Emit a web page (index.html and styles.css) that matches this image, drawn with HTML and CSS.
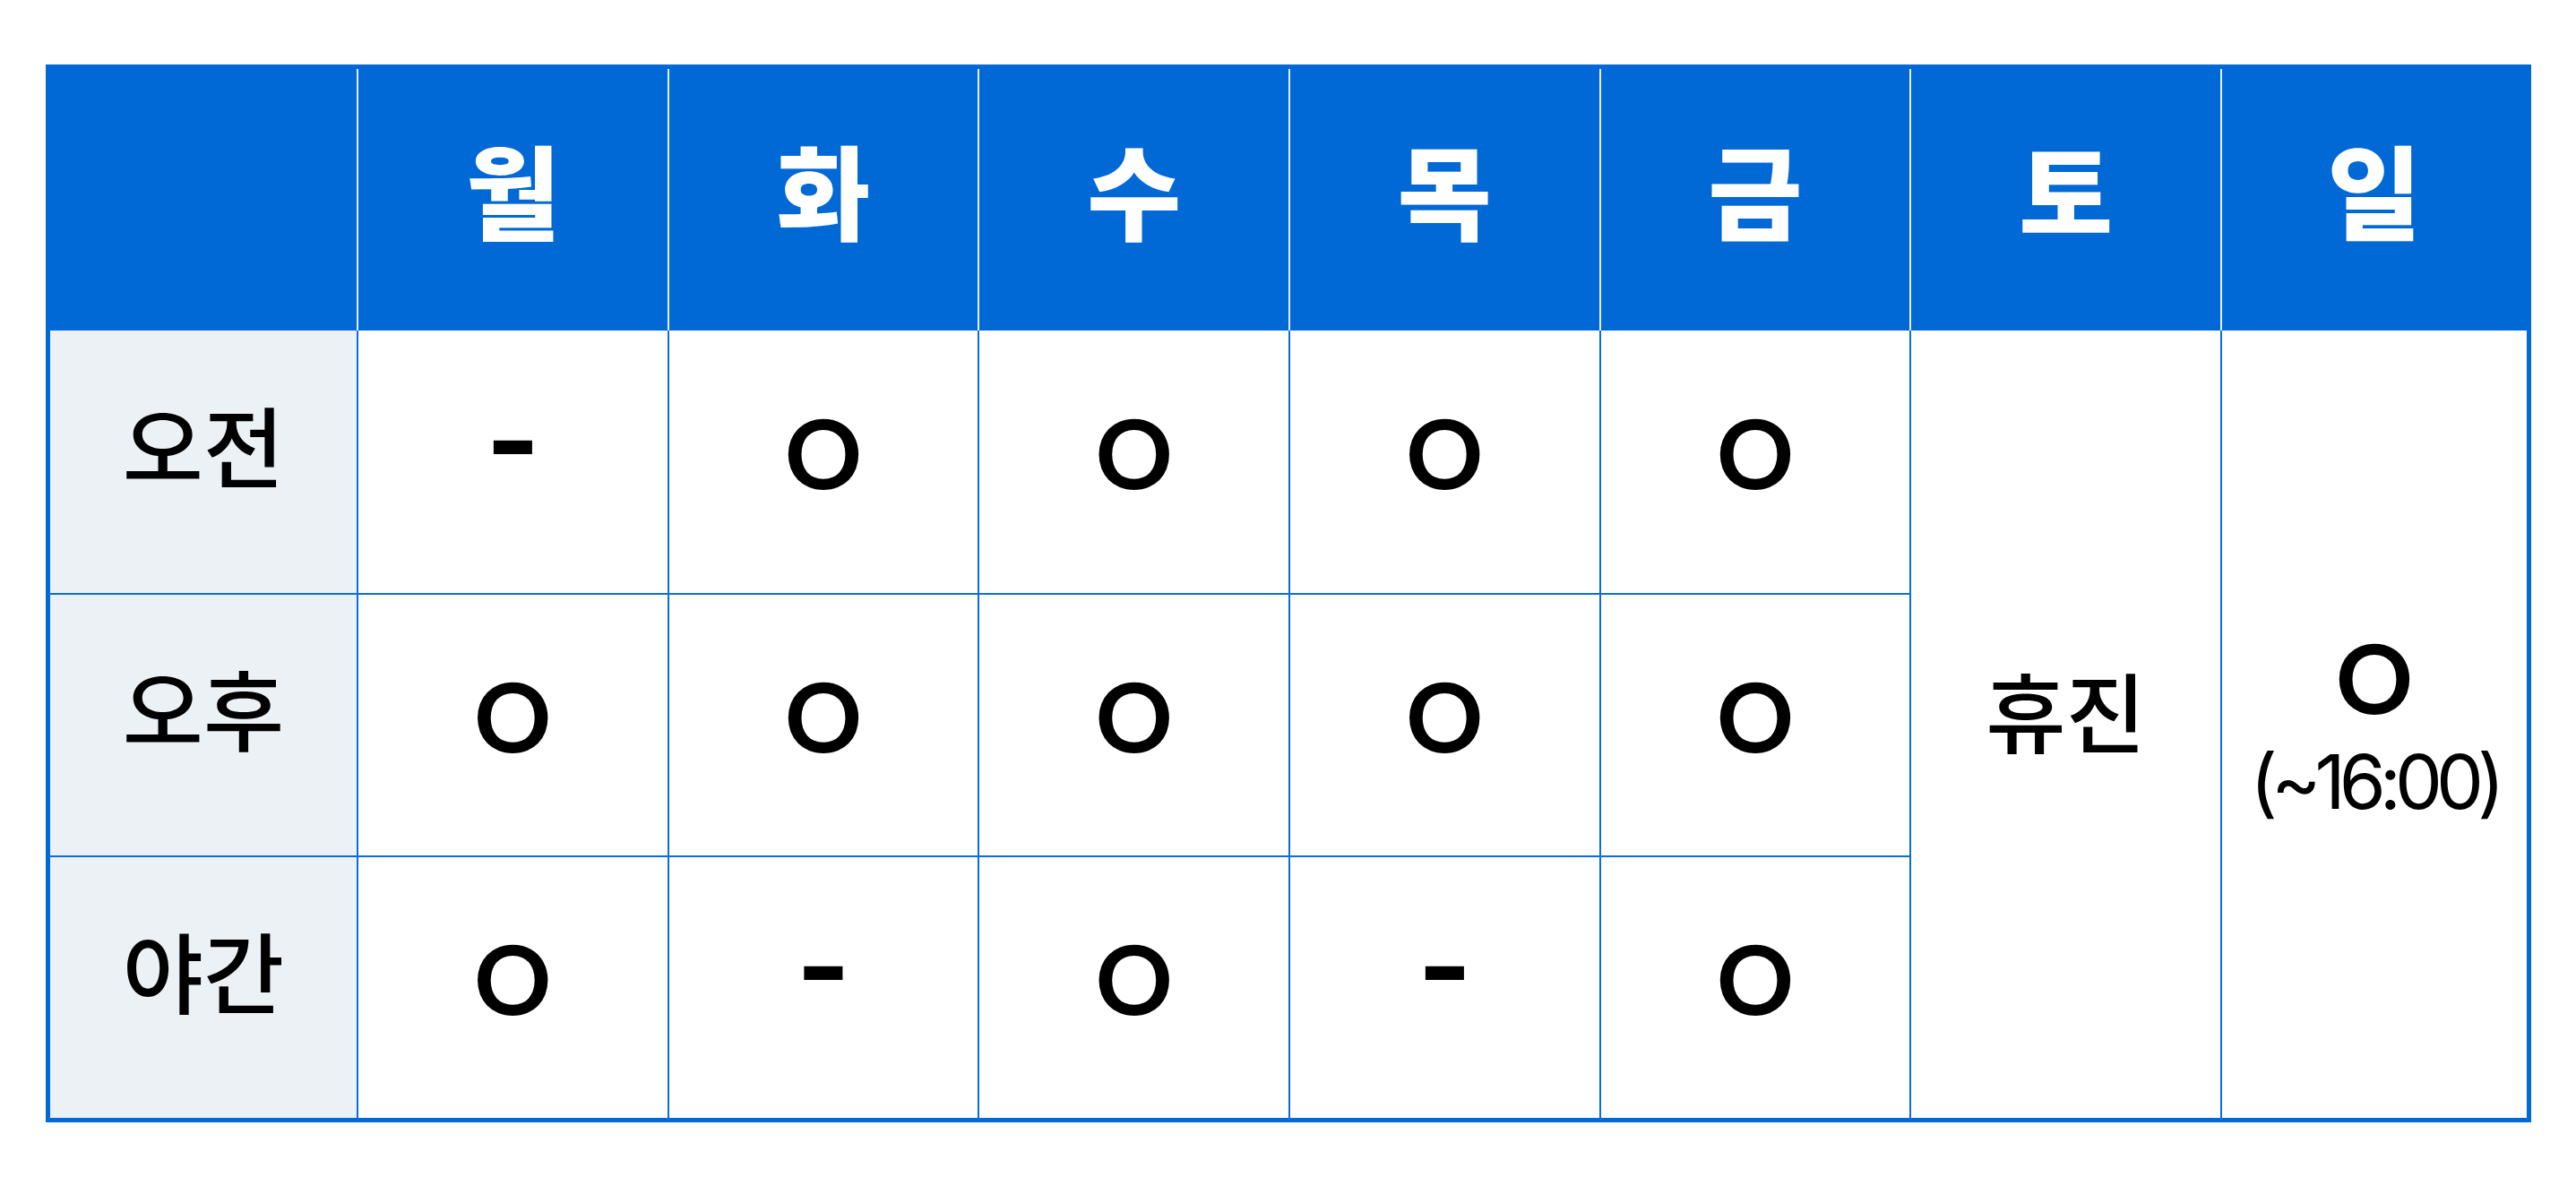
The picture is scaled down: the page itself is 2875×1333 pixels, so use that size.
FILE: index.html
```html
<!DOCTYPE html>
<html lang="ko">
<head>
<meta charset="utf-8">
<title>진료시간</title>
<link rel="stylesheet" href="styles.css">
</head>
<body>
<div class="page">
  <div class="frame">
    <table class="schedule">
      <colgroup>
        <col class="c-edge">
        <col class="c-mid"><col class="c-mid"><col class="c-mid">
        <col class="c-mid"><col class="c-mid"><col class="c-mid">
        <col class="c-edge">
      </colgroup>
      <thead>
        <tr class="head-row">
          <th class="hd"></th>
          <th class="hd">월</th>
          <th class="hd">화</th>
          <th class="hd">수</th>
          <th class="hd">목</th>
          <th class="hd">금</th>
          <th class="hd">토</th>
          <th class="hd">일</th>
        </tr>
      </thead>
      <tbody>
        <tr class="row first">
          <th class="label">오전</th>
          <td class="cell dash-cell"><span class="dash">-</span></td>
          <td class="cell"><span class="mark">O</span></td>
          <td class="cell"><span class="mark">O</span></td>
          <td class="cell"><span class="mark">O</span></td>
          <td class="cell"><span class="mark">O</span></td>
          <td class="cell closed" rowspan="3"><span class="word">휴진</span></td>
          <td class="cell sunday" rowspan="3">
            <div class="sun-box">
              <span class="mark">O</span>
              <span class="time">(~16:00)</span>
            </div>
          </td>
        </tr>
        <tr class="row">
          <th class="label">오후</th>
          <td class="cell"><span class="mark">O</span></td>
          <td class="cell"><span class="mark">O</span></td>
          <td class="cell"><span class="mark">O</span></td>
          <td class="cell"><span class="mark">O</span></td>
          <td class="cell"><span class="mark">O</span></td>
        </tr>
        <tr class="row">
          <th class="label">야간</th>
          <td class="cell"><span class="mark">O</span></td>
          <td class="cell dash-cell"><span class="dash">-</span></td>
          <td class="cell"><span class="mark">O</span></td>
          <td class="cell dash-cell"><span class="dash">-</span></td>
          <td class="cell"><span class="mark">O</span></td>
        </tr>
      </tbody>
    </table>
  </div>
</div>
</body>
</html>
```
FILE: styles.css
```css
html, body {
  margin: 0;
  padding: 0;
  background: #ffffff;
}

.page {
  padding: 72px 0 0 51px;
}

.frame {
  width: 2774px;
  box-sizing: border-box;
  border: 5px solid #0069d6;
  background: #ffffff;
}

.schedule {
  width: 100%;
  border-spacing: 0;
  border-collapse: separate;
  table-layout: fixed;
  font-family: "Noto Sans CJK KR", "Noto Sans", sans-serif;
}

.c-edge { width: 342px; }
.c-mid { width: 346.67px; }

.hd {
  height: 292px;
  padding: 0 0 26px 0;
  box-sizing: border-box;
  background: #0069d6;
  color: #ffffff;
  font-size: 114px;
  font-weight: 900;
  line-height: 1;
  text-align: center;
  vertical-align: middle;
  border-left: 2px solid #e6effa;
}

.hd:first-child {
  border-left: none;
}

.row th,
.row td {
  height: 293px;
  padding: 0 0 22px 0;
  box-sizing: border-box;
  text-align: center;
  vertical-align: middle;
  border-left: 2px solid #0a6ddc;
  border-top: 2px solid #0a6ddc;
  line-height: 1;
}

.row.first th,
.row.first td {
  border-top: none;
}

.row .label {
  border-left: none;
  background: #ecf1f6;
  font-size: 98px;
  font-weight: 500;
  color: #000000;
  padding-bottom: 44px;
}

.row .closed {
  padding-bottom: 36px;
}

.word {
  font-size: 97px;
  font-weight: 500;
  color: #000000;
}

.mark {
  font-family: "Lato", "Noto Sans", sans-serif;
  font-weight: 700;
  font-size: 107px;
  color: #000000;
}

.row .dash-cell {
  padding-bottom: 50px;
}

.dash {
  font-family: "Inter", sans-serif;
  font-weight: 700;
  font-size: 130px;
  color: #000000;
}

.row .sunday {
  padding-bottom: 0;
}

.sun-box {
  display: flex;
  flex-direction: column;
  align-items: center;
  gap: 22px;
}

.time {
  font-family: "Inter", "Noto Sans", sans-serif;
  font-weight: 400;
  font-size: 84px;
  letter-spacing: -7px;
  color: #000000;
}
```
